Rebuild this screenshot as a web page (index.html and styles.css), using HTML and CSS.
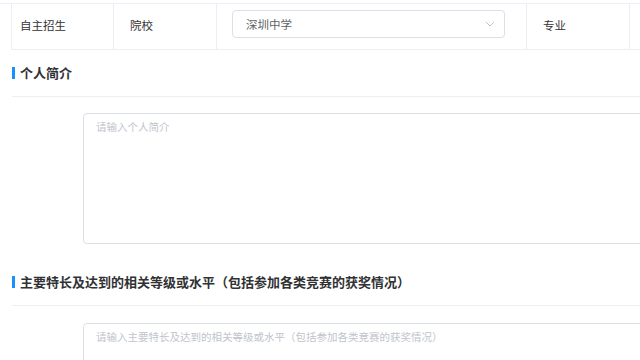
FILE: index.html
```html
<!DOCTYPE html>
<html lang="zh-CN">
<head>
<meta charset="utf-8">
<title>自主招生</title>
<link rel="stylesheet" href="styles.css">
</head>
<body>
<div class="page">
  <div class="info-row">
    <div class="cell cell-first">自主招生</div>
    <div class="cell cell-label">院校</div>
    <div class="cell cell-select">
      <div class="select">
        <span class="select-text">深圳中学</span>
        <svg class="select-arrow" width="10" height="6" viewBox="0 0 10 6"><path d="M1 1 L5 5 L9 1" fill="none" stroke="#c0c4cc" stroke-width="1"/></svg>
      </div>
    </div>
    <div class="cell cell-label">专业</div>
    <div class="cell cell-rest"></div>
  </div>

  <div class="section-head">
    <span class="bar"></span>
    <span class="section-title">个人简介</span>
  </div>
  <div class="field">
    <div class="textarea"><span class="placeholder">请输入个人简介</span></div>
  </div>

  <div class="section-head">
    <span class="bar"></span>
    <span class="section-title">主要特长及达到的相关等级或水平（包括参加各类竞赛的获奖情况）</span>
  </div>
  <div class="field field-second">
    <div class="textarea"><span class="placeholder placeholder-wide">请输入主要特长及达到的相关等级或水平（包括参加各类竞赛的获奖情况）</span></div>
  </div>
</div>
</body>
</html>
```

FILE: styles.css
```css
* { box-sizing: border-box; }
html, body {
  margin: 0;
  padding: 0;
  background: #ffffff;
  overflow: hidden;
}
body {
  font-family: "Noto Sans CJK SC", "Noto Sans", sans-serif;
  color: #303133;
  width: 640px;
  height: 360px;
}
.page {
  padding-top: 3px;
}
.info-row {
  display: grid;
  grid-template-columns: 11px 103px 103px 310px 103px 1fr;
  height: 46px;
  border-top: 1px solid #ebeef5;
}
.info-row::before {
  content: "";
}
.cell {
  display: flex;
  align-items: center;
  border-right: 1px solid #ebeef5;
  border-bottom: 1px solid #ebeef5;
  font-size: 11.5px;
  line-height: 16px;
  color: #333333;
  padding-bottom: 4px;
}
.cell-first {
  border-left: 1px solid #ebeef5;
  padding-left: 8px;
}
.cell-label {
  padding-left: 16px;
}
.cell-select {
  padding: 6px 21px 11px 15px;
}
.cell-rest {
  border-right: none;
}
.select {
  flex: 1;
  height: 28px;
  border: 1px solid #dcdfe6;
  border-radius: 4px;
  display: flex;
  align-items: center;
  justify-content: space-between;
  padding: 0 9px 0 13px;
}
.select-text {
  font-size: 11.5px;
  color: #606266;
  line-height: 16px;
}
.select-arrow {
  display: block;
}
.section-head {
  height: 48px;
  margin-left: 12px;
  border-bottom: 1px solid #eeeeee;
  display: flex;
  align-items: center;
  gap: 5px;
}
.bar {
  width: 3px;
  height: 12px;
  background: #1890ff;
}
.section-title {
  font-size: 13px;
  font-weight: 700;
  line-height: 18px;
  color: #303133;
}
.field {
  padding: 16px 0 14px 83px;
}
.field-second {
  padding-top: 17px;
}
.textarea {
  width: 600px;
  height: 131px;
  border: 1px solid #dcdfe6;
  border-radius: 4px;
  padding: 5px 12px;
}
.placeholder {
  display: block;
  font-size: 10.5px;
  line-height: 16px;
  color: #c0c4cc;
}
.placeholder-wide {
  font-size: 10.5px;
}
```
